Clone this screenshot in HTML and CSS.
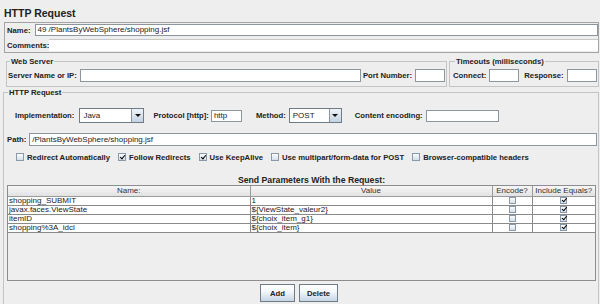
FILE: index.html
```html
<!DOCTYPE html>
<html lang="en">
<head>
    <meta charset="UTF-8">
    <meta name="viewport" content="width=device-width, initial-scale=1.0">
    <title>HTTP Request</title>
    <link rel="stylesheet" href="styles.css">
</head>
<body>
    <h1 class="title">HTTP Request</h1>

    <div class="name-panel">
        <div class="name-row">
            <span class="lbl lbl-name">Name:</span>
            <div class="field grow">49 /PlantsByWebSphere/shopping.jsf</div>
        </div>
        <div class="name-row comments">
            <span class="lbl">Comments:</span>
            <div class="area grow"></div>
        </div>
    </div>

    <div class="server-row">
        <fieldset class="group web-server">
            <legend>Web Server</legend>
            <div class="row">
                <span class="lbl">Server Name or IP:</span>
                <div class="field tall grow"></div>
                <span class="lbl after-field">Port Number:</span>
                <div class="field tall w30"></div>
            </div>
        </fieldset>
        <fieldset class="group timeouts">
            <legend>Timeouts (milliseconds)</legend>
            <div class="row">
                <span class="lbl">Connect:</span>
                <div class="field tall w30"></div>
                <span class="lbl after-field wide-gap">Response:</span>
                <div class="field tall w30"></div>
            </div>
        </fieldset>
    </div>

    <fieldset class="group request">
        <legend>HTTP Request</legend>

        <div class="row impl-row">
            <span class="lbl lbl-impl">Implementation:</span>
            <div class="combo combo-impl">
                <span class="combo-text">Java</span>
                <span class="combo-btn"><i class="arrow"></i></span>
            </div>
            <span class="lbl gap9">Protocol [http]:</span>
            <div class="field w31 lbl-tight">http</div>
            <span class="lbl gap14">Method:</span>
            <div class="combo combo-method">
                <span class="combo-text">POST</span>
                <span class="combo-btn"><i class="arrow"></i></span>
            </div>
            <span class="lbl gap13">Content encoding:</span>
            <div class="field w73"></div>
        </div>

        <div class="row path-row">
            <span class="lbl">Path:</span>
            <div class="field tall grow">/PlantsByWebSphere/shopping.jsf</div>
        </div>

        <div class="row checks">
            <label class="check"><span class="box"></span>Redirect Automatically</label>
            <label class="check"><span class="box on"></span>Follow Redirects</label>
            <label class="check"><span class="box on"></span>Use KeepAlive</label>
            <label class="check"><span class="box"></span>Use multipart/form-data for POST</label>
            <label class="check"><span class="box"></span>Browser-compatible headers</label>
        </div>

        <div class="params-title">Send Parameters With the Request:</div>

        <div class="params">
            <table>
                <colgroup>
                    <col class="c-name">
                    <col class="c-value">
                    <col class="c-enc">
                    <col class="c-eq">
                </colgroup>
                <thead>
                    <tr><th>Name:</th><th>Value</th><th>Encode?</th><th>Include Equals?</th></tr>
                </thead>
                <tbody>
                    <tr><td>shopping_SUBMIT</td><td>1</td><td class="mid"><span class="cell-box"></span></td><td class="mid"><span class="cell-box on"></span></td></tr>
                    <tr><td>javax.faces.ViewState</td><td>${ViewState_valeur2}</td><td class="mid"><span class="cell-box"></span></td><td class="mid"><span class="cell-box on"></span></td></tr>
                    <tr><td>itemID</td><td>${choix_item_g1}</td><td class="mid"><span class="cell-box"></span></td><td class="mid"><span class="cell-box on"></span></td></tr>
                    <tr><td>shopping%3A_idcl</td><td>${choix_item}</td><td class="mid"><span class="cell-box"></span></td><td class="mid"><span class="cell-box on"></span></td></tr>
                </tbody>
            </table>
        </div>

        <div class="buttons">
            <button class="btn">Add</button>
            <button class="btn">Delete</button>
        </div>
    </fieldset>
</body>
</html>
```

FILE: styles.css
```css
* {
    box-sizing: border-box;
}

body {
    margin: 0;
    width: 600px;
    height: 304px;
    overflow: hidden;
    background-color: #eeeeee;
    font-family: "Liberation Sans", Arial, sans-serif;
    color: #222;
}

.title {
    margin: 0;
    padding: 7px 0 0 4px;
    font-size: 10.5px;
    line-height: 12px;
    font-weight: bold;
}

.lbl {
    font-size: 7.7px;
    line-height: 9px;
    font-weight: bold;
    white-space: nowrap;
    margin-right: 3px;
}

.field {
    height: 12px;
    background-color: #fff;
    border: 1px solid #8d969f;
    font-size: 8px;
    line-height: 10px;
    padding: 0 2px;
    white-space: nowrap;
    overflow: hidden;
}

.field.tall {
    height: 13px;
    line-height: 11px;
}

.grow {
    flex: 1;
}

.w30 { width: 30px; }
.w31 { width: 31px; }
.w73 { width: 73px; }

.row {
    display: flex;
    align-items: center;
}

/* name / comments */
.name-panel {
    margin: 3px 1px 0 4px;
    border: 1px solid #a4a4a4;
    padding: 1px 0 1px 1px;
}

.name-row {
    display: flex;
    align-items: center;
    height: 12px;
    padding-left: 1px;
}

.lbl-name {
    margin-right: 4px;
}

.name-row.comments {
    margin-top: 3px;
}

.comments .lbl {
    margin-right: 0;
}

.area {
    height: 12px;
    background-color: #fff;
    border-top: 1px solid #c8c8c8;
}

/* fieldsets */
.group {
    margin: 0;
    min-width: 0;
    border: 1px solid #c4c4c4;
}

.group legend {
    font-size: 7.7px;
    line-height: 9px;
    font-weight: bold;
    padding: 0 1px;
    margin-left: 2px;
}

.server-row {
    display: flex;
    gap: 2px;
    margin: 4px 1px 0 6px;
}

.web-server {
    flex: 1;
    padding: 3px 1px 4px 1px;
}

.timeouts {
    width: 150px;
    padding: 3px 1px 4px 3px;
}

.web-server .row,
.timeouts .row {
    height: 13px;
}

.after-field {
    margin-left: 2px;
}

.after-field.wide-gap {
    margin-left: 5px;
}

.request {
    margin: 1px 1px 0 3px;
    padding: 0 1px;
    height: 216px;
    border-bottom: 0;
}

.request legend {
    margin-left: 3px;
}

.impl-row {
    height: 15px;
    margin-top: 11px;
    padding-left: 10px;
}

.lbl-impl {
    margin-right: 5px;
}

.gap9 { margin-left: 9px; }
.gap13 { margin-left: 13px; }
.gap14 { margin-left: 14px; }

.lbl-tight {
    margin-left: -1px;
}

.combo {
    display: flex;
    height: 15px;
    background-color: #fff;
    border: 1px solid #6f7b87;
}

.combo-impl { width: 65px; }
.combo-method { width: 53px; }

.combo-text {
    flex: 1;
    font-size: 8px;
    line-height: 13px;
    padding-left: 3px;
}

.combo-btn {
    width: 12px;
    display: flex;
    align-items: center;
    justify-content: center;
    border-left: 1px solid #8d969f;
    background: linear-gradient(#eef3f8, #c3d3e3);
}

.arrow {
    width: 0;
    height: 0;
    border-left: 3px solid transparent;
    border-right: 3px solid transparent;
    border-top: 3px solid #111;
}

.path-row {
    margin-top: 10px;
    height: 13px;
    padding-left: 2px;
}

.checks {
    margin-top: 6px;
    height: 10px;
    padding-left: 11px;
    gap: 8px;
}

.check {
    display: flex;
    align-items: center;
    font-size: 7.7px;
    line-height: 9px;
    font-weight: bold;
    white-space: nowrap;
}

.box,
.cell-box {
    position: relative;
    display: inline-block;
    width: 8px;
    height: 8px;
    border: 1px solid #8a99a8;
    background: linear-gradient(#fbfcfd, #d5dee8);
    margin-right: 3px;
}

.box.on::after,
.cell-box.on::after {
    content: "";
    position: absolute;
    left: 2px;
    top: 0;
    width: 2px;
    height: 4px;
    border-right: 1.5px solid #000;
    border-bottom: 1.5px solid #000;
    transform: rotate(40deg);
}

.params-title {
    margin-top: 14px;
    padding-left: 21px;
    text-align: center;
    font-size: 8.7px;
    line-height: 9px;
    font-weight: bold;
}

/* parameter table */
.params {
    height: 96px;
    margin: 0 1px 0 2px;
    border: 1px solid #8d8d8d;
    background-color: #eeeeee;
}

table {
    width: 100%;
    border-collapse: collapse;
    table-layout: fixed;
    font-size: 8px;
}

.c-name { width: 242px; }
.c-value { width: 242px; }
.c-enc { width: 40px; }
.c-eq { width: 63px; }

th {
    height: 10px;
    padding: 0;
    font-weight: normal;
    line-height: 9px;
    color: #333;
    background: linear-gradient(#f6f6f6, #e2e2e2);
    border-right: 1px solid #9a9a9a;
    border-bottom: 1px solid #9a9a9a;
}

td {
    height: 9px;
    padding: 0 0 0 1px;
    line-height: 8px;
    background-color: #fff;
    border-right: 1px solid #8a8a8a;
    border-bottom: 1px solid #8a8a8a;
    white-space: nowrap;
    overflow: hidden;
}

th:last-child,
td:last-child {
    border-right: 0;
}

td.mid {
    padding: 0;
    text-align: center;
}

.cell-box {
    width: 7px;
    height: 7px;
    margin: 0;
    vertical-align: top;
}

.cell-box.on::after {
    left: 1.5px;
    top: -0.5px;
    height: 3.5px;
}

.buttons {
    display: flex;
    justify-content: center;
    gap: 4px;
    margin-top: 3px;
    padding-right: 4px;
}

.btn {
    min-width: 35px;
    height: 18px;
    padding: 0 7px;
    border: 1px solid #6f7b87;
    background: linear-gradient(#ffffff, #f4f7fa 40%, #c6d6e6);
    font-family: inherit;
    font-size: 7.7px;
    font-weight: bold;
    color: #222;
}
```
